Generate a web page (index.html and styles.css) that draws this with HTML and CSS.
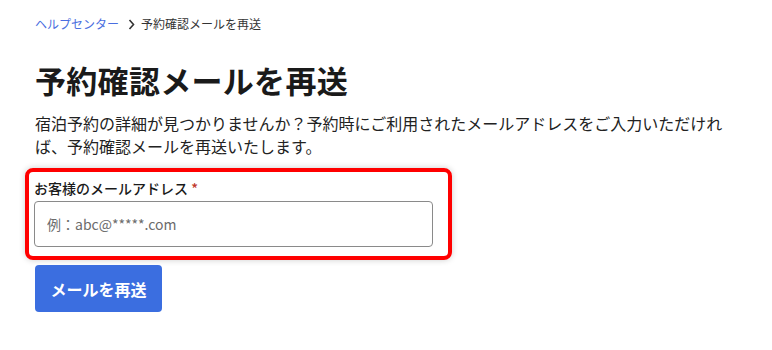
FILE: index.html
```html
<!DOCTYPE html>
<html lang="ja">
<head>
  <meta charset="UTF-8" />
  <meta name="viewport" content="width=device-width, initial-scale=1.0">
  <title>予約確認メールを再送</title>
  <link rel="stylesheet" href="styles.css">
</head>
<body>
  <div class="page">
    <nav class="breadcrumb">
      <a href="#">ヘルプセンター</a>
      <svg class="sep" width="7" height="11" viewBox="0 0 7 11"><polyline points="1.5,1 5.5,5.5 1.5,10" fill="none" stroke="#333" stroke-width="1.6"/></svg>
      <span>予約確認メールを再送</span>
    </nav>

    <h1>予約確認メールを再送</h1>

    <p class="lead">宿泊予約の詳細が見つかりませんか？予約時にご利用されたメールアドレスをご入力いただければ、予約確認メールを再送いたします。</p>

    <div class="field-box">
      <label for="email">お客様のメールアドレス <span class="req">*</span></label>
      <input type="email" id="email" placeholder="例：abc@*****.com">
    </div>

    <button class="send-btn">メールを再送</button>
  </div>
</body>
</html>
```

FILE: styles.css
```css
body {
  margin: 0;
  font-family: "Noto Sans CJK JP", "Noto Sans", sans-serif;
  color: #1a1a1a;
  background: #fff;
}
.page {
  padding: 14px 0 0 35px;
  width: 700px;
}
.breadcrumb {
  font-size: 12px;
  line-height: 20px;
  color: #333;
  display: flex;
  align-items: center;
  gap: 6px;
}
.breadcrumb a {
  color: #4a6ee0;
  text-decoration: none;
}
.breadcrumb .sep {
  margin-left: 3px;
}
h1 {
  font-size: 31px;
  font-weight: bold;
  margin: 23px 0 0;
  line-height: 46px;
  letter-spacing: 0.3px;
}
.lead {
  font-size: 16px;
  line-height: 23px;
  margin: 9px 0 0;
  color: #222;
}
.field-box {
  margin: 10px 0 0 -10px;
  width: 399px;
  padding: 6px 15px 9px 5px;
  border: 4px solid #ff0000;
  border-radius: 8px;
  box-shadow: 0 0 6px rgba(0, 0, 0, 0.2);
}
.field-box label {
  display: block;
  font-size: 14px;
  font-weight: 500;
  line-height: 20px;
  margin-bottom: 3px;
}
.req {
  color: #c0392b;
}
.field-box input {
  display: block;
  box-sizing: border-box;
  width: 399px;
  height: 46px;
  border: 1px solid #8a8a8a;
  border-radius: 4px;
  padding: 0 12px;
  font-family: inherit;
  font-size: 14px;
}
.field-box input::placeholder {
  color: #6b6b6b;
}
.send-btn {
  margin-top: 5px;
  width: 127px;
  height: 47px;
  background-color: #3b6ee0;
  border: none;
  border-radius: 4px;
  color: white;
  font-family: inherit;
  font-size: 16px;
  font-weight: bold;
  cursor: pointer;
}
```
